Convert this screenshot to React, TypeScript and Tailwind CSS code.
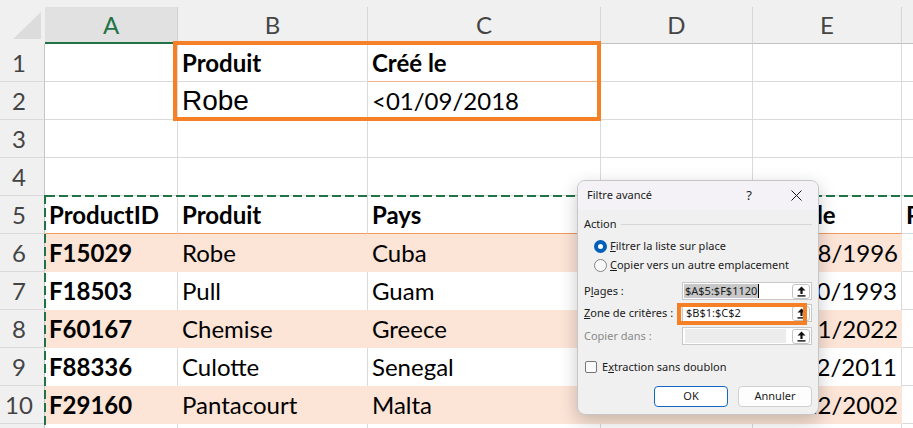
import React from "react";

type CellSpec = { t?: string; b?: boolean; arial?: boolean; right?: boolean; tint?: boolean; wide?: boolean };
type RowKind = "plain" | "thead" | "fill" | "band";

const cols = "grid grid-cols-[45px_133px_190px_233px_152px_149px_150px]";

const rows: { n: number; kind: RowKind; cells: CellSpec[] }[] = [
  { n: 1, kind: "plain", cells: [{}, { t: "Produit", b: true }, { t: "Créé le", b: true, tint: true }, {}, {}, {}] },
  { n: 2, kind: "plain", cells: [{}, { t: "Robe", arial: true }, { t: "<01/09/2018" }, {}, {}, {}] },
  { n: 3, kind: "plain", cells: [{}, {}, {}, {}, {}, {}] },
  { n: 4, kind: "plain", cells: [{}, {}, {}, {}, {}, {}] },
  {
    n: 5,
    kind: "thead",
    cells: [
      { t: "ProductID", b: true },
      { t: "Produit", b: true },
      { t: "Pays", b: true },
      { t: "Catégorie", b: true },
      { t: "Créé le", b: true, wide: true },
      { t: "Prix", b: true },
    ],
  },
  { n: 6, kind: "fill", cells: [{ t: "F15029", b: true }, { t: "Robe" }, { t: "Cuba" }, { t: "Femme" }, { t: "12/08/1996", right: true }, {}] },
  { n: 7, kind: "band", cells: [{ t: "F18503", b: true }, { t: "Pull" }, { t: "Guam" }, { t: "Homme" }, { t: "25/10/1993", right: true }, {}] },
  { n: 8, kind: "fill", cells: [{ t: "F60167", b: true }, { t: "Chemise" }, { t: "Greece" }, { t: "Homme" }, { t: "03/11/2022", right: true }, {}] },
  { n: 9, kind: "band", cells: [{ t: "F88336", b: true }, { t: "Culotte" }, { t: "Senegal" }, { t: "Femme" }, { t: "17/12/2011", right: true }, {}] },
  { n: 10, kind: "fill", cells: [{ t: "F29160", b: true }, { t: "Pantacourt" }, { t: "Malta" }, { t: "Femme" }, { t: "09/12/2002", right: true }, {}] },
  { n: 11, kind: "band", cells: [{}, {}, {}, {}, {}, {}] },
];

function cellBox(kind: RowKind, col: number, c: CellSpec) {
  if (col === 5) return "border-r border-b border-[#dadada]";
  if (kind === "fill") return "bg-[#fce4d6]";
  if (kind === "band") return "border-r border-[#dadada]";
  if (kind === "thead") return "border-r border-r-[#dadada] border-b border-b-[#f09a5e]";
  if (c.tint) return "border-r border-r-[#dadada] border-b border-b-[#f2b48a]";
  return "border-r border-b border-[#dadada]";
}

function SheetRow({ n, kind, cells }: { n: number; kind: RowKind; cells: CellSpec[] }) {
  return (
    <div className={`${cols} h-[38px]`}>
      <div className="bg-[#f0f0f0] border-r border-r-[#c6c6c6] border-b border-b-[#dadada] flex items-center justify-center pr-[6px] text-[24px] leading-none text-[#444]">
        {n < 11 ? n : ""}
      </div>
      {cells.map((c, i) => (
        <div
          key={i}
          className={`${cellBox(kind, i, c)} flex items-center whitespace-nowrap overflow-hidden leading-none text-black ${
            c.right ? "justify-end pr-[4px]" : c.wide ? "pl-[8px]" : "pl-[4px]"
          } ${c.arial ? "font-['Liberation_Sans',sans-serif] text-[28px]" : "text-[24px]"} ${c.b ? "font-bold" : ""}`}
        >
          {c.t}
        </div>
      ))}
    </div>
  );
}

function ColumnHeader() {
  const letters = ["A", "B", "C", "D", "E", "F"];
  return (
    <div className={`${cols} h-[44px] bg-[#f0f0f0]`}>
      <div className="relative">
        <svg className="absolute left-0 top-0" width="44" height="44" viewBox="0 0 44 44">
          <polygon points="13,39 41,39 41,12" fill="#dcdcdc" />
        </svg>
      </div>
      {letters.map((l, i) => (
        <div key={l} className="pt-[7px] flex flex-col">
          <div
            className={
              i === 0
                ? "flex-1 flex items-center justify-center bg-[#e1e1e1] border-r border-r-[#d0d0d0] border-b-2 border-b-[#217346] text-[#217346] text-[24px] leading-none"
                : "flex-1 flex items-center justify-center border-r border-r-[#d6d6d6] border-b border-b-[#c2c2c2] text-[#454545] text-[24px] leading-none"
            }
          >
            {l}
          </div>
        </div>
      ))}
    </div>
  );
}

function RefButton() {
  return (
    <div className="ml-auto mr-[1px] w-[18px] h-[15px] rounded-[3px] border border-[#c4c4c4] bg-white flex items-center justify-center">
      <svg width="9" height="11" viewBox="0 0 9 11">
        <path d="M4.5 0.5 L8.5 4.6 L5.6 4.6 L5.6 8 L3.4 8 L3.4 4.6 L0.5 4.6 Z" fill="#111" />
        <rect x="0.5" y="9.2" width="8" height="1.4" fill="#111" />
      </svg>
    </div>
  );
}

function FilterDialog() {
  return (
    <div className="absolute left-[577px] top-[180px] w-[242px] h-[235px] rounded-[8px] border border-[#c6c6c6] bg-[#f0f0f0] shadow-[0_6px_18px_rgba(0,0,0,0.22)] overflow-hidden font-['Noto_Sans',sans-serif] text-[11px] text-[#1b1b1b] flex flex-col">
      <div className="h-[29px] bg-[#f4f2f7] flex items-center pl-[9px] pr-[16px]">
        <span>Filtre avancé</span>
        <span className="ml-auto mr-[39px] text-[13px] leading-none">?</span>
        <svg width="11" height="11" viewBox="0 0 11 11">
          <path d="M0.5 0.5 L10.5 10.5 M10.5 0.5 L0.5 10.5" stroke="#1b1b1b" strokeWidth="1" />
        </svg>
      </div>
      <div className="flex-1 flex flex-col pl-[6px] pr-[6px]">
        <div className="mt-[7px] h-[14px] flex items-center">
          <span>Action</span>
          <div className="flex-1 h-px bg-[#d6d6d6] ml-[4px]" />
        </div>
        <div className="mt-[8px] h-[14px] flex items-center pl-[10px]">
          <div className="w-[13px] h-[13px] rounded-full bg-[#005fb8] flex items-center justify-center">
            <div className="w-[5px] h-[5px] rounded-full bg-white" />
          </div>
          <span className="ml-[3px]">
            <u>F</u>iltrer la liste sur place
          </span>
        </div>
        <div className="mt-[5px] h-[14px] flex items-center pl-[10px]">
          <div className="w-[13px] h-[13px] rounded-full border border-[#858585] bg-[#f8f8f8]" />
          <span className="ml-[3px]">
            <u>C</u>opier vers un autre emplacement
          </span>
        </div>
        <div className="mt-[10px] h-[18px] flex items-center">
          <span className="w-[98px]">
            P<u>l</u>ages :
          </span>
          <div className="w-[130px] h-[18px] border border-[#c8c8c8] bg-white flex items-center pl-[1px]">
            <span className="bg-[#c8c8c8] h-[14px] leading-[14px] pl-[1px] pr-[1px]">$A$5:$F$1120</span>
            <span className="w-px h-[14px] bg-black" />
            <RefButton />
          </div>
        </div>
        <div className="mt-[4px] h-[18px] flex items-center">
          <span className="w-[98px]">
            <u>Z</u>one de critères :
          </span>
          <div className="w-[130px] h-[18px] border border-[#c8c8c8] bg-white flex items-center pl-[3px]">
            <span>$B$1:$C$2</span>
            <RefButton />
          </div>
        </div>
        <div className="mt-[5px] h-[18px] flex items-center">
          <span className="w-[98px] text-[#8a8a8a]">Copier dans :</span>
          <div className="w-[130px] h-[18px] border border-[#c8c8c8] bg-white flex items-center pl-[2px]">
            <div className="w-[101px] h-[14px] bg-[#ececec]" />
            <RefButton />
          </div>
        </div>
        <div className="mt-[15px] h-[14px] flex items-center pl-[1px]">
          <div className="w-[12px] h-[12px] rounded-[2px] border border-[#767676] bg-[#fbfbfb]" />
          <span className="ml-[5px]">
            E<u>x</u>traction sans doublon
          </span>
        </div>
        <div className="mt-[12px] flex justify-end gap-[10px]">
          <div className="w-[74px] h-[21px] rounded-[4px] border border-[#1268c0] bg-white flex items-center justify-center">
            OK
          </div>
          <div className="w-[74px] h-[21px] rounded-[4px] border border-[#d0d0d0] bg-[#fdfdfd] flex items-center justify-center">
            Annuler
          </div>
        </div>
      </div>
    </div>
  );
}

export default function App() {
  return (
    <div className="relative w-[913px] h-[428px] overflow-hidden bg-white font-['Lato',sans-serif]">
      <ColumnHeader />
      {rows.map((r) => (
        <SheetRow key={r.n} n={r.n} kind={r.kind} cells={r.cells} />
      ))}

      {/* criteria range outline */}
      <div className="absolute left-[173px] top-[41px] w-[428px] h-[80px] border-4 border-[#f58025]" />

      {/* copy marquee around the list range */}
      <div className="absolute left-[46px] right-0 top-[195px] h-[2px] bg-[image:repeating-linear-gradient(90deg,#217346_0px,#217346_9px,transparent_9px,transparent_13px)]" />
      <div className="absolute left-[44px] top-[195px] bottom-0 w-[2px] bg-[image:repeating-linear-gradient(180deg,#217346_0px,#217346_9px,transparent_9px,transparent_13px)]" />

      <FilterDialog />

      {/* criteria field outline */}
      <div className="absolute left-[677px] top-[303px] w-[130px] h-[22px] border-4 border-[#f58025]" />
    </div>
  );
}
